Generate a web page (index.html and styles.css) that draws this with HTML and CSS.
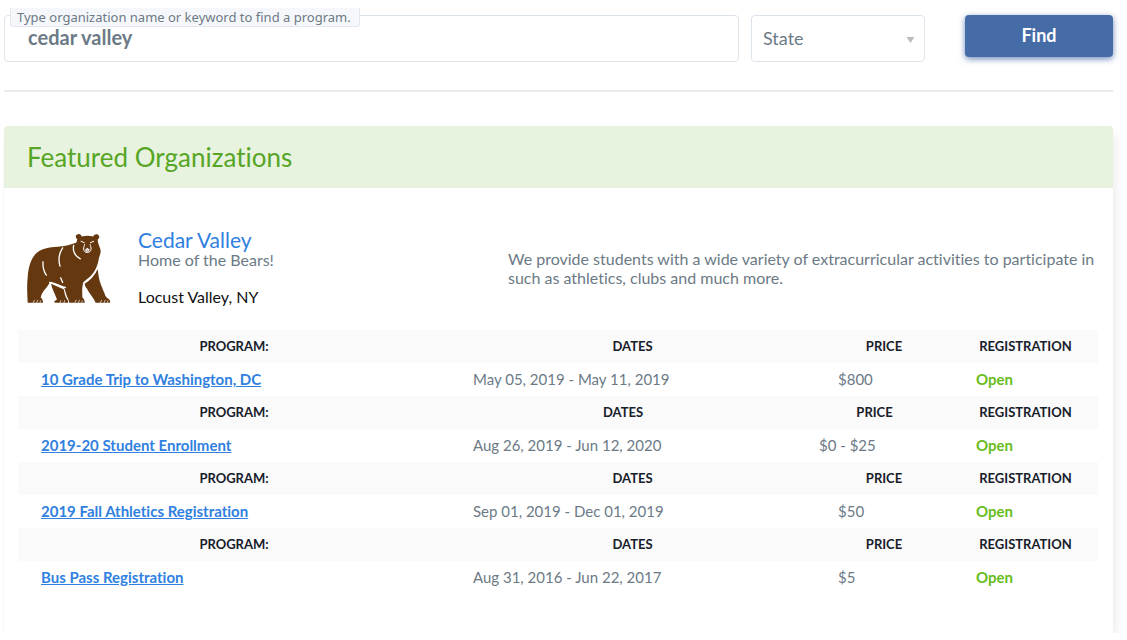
FILE: index.html
```html
<!DOCTYPE html>
<html lang="en">

<head>
    <meta charset="UTF-8">
    <meta name="viewport" content="width=device-width, initial-scale=1.0">
    <title>Find a program</title>
    <link rel="stylesheet" href="styles.css">
</head>

<body>
    <main class="page">
        <form class="search" action="#">
            <div class="search-field">
                <label class="search-label" for="keyword">Type organization name or keyword to find a program.</label>
                <input class="search-input" id="keyword" type="text" value="cedar valley">
            </div>
            <div class="state-field">
                <select class="state-select" aria-label="State">
                    <option>State</option>
                    <option>NY</option>
                </select>
                <svg class="state-arrow" viewBox="0 0 8 6"><path d="M0 0h8L4 6z" /></svg>
            </div>
            <button class="find-btn" type="submit">Find</button>
        </form>

        <section class="card">
            <h1 class="card-title">Featured Organizations</h1>
            <div class="card-body">
                <div class="org">
                    <svg class="org-logo" viewBox="33 40 258 212">
                        <!-- body and head -->
                        <path fill="#65380f" d="M38 249C37 226 35 200 38 172C40 142 47 119 62 102C78 86 103 82 128 81C148 80 164 76 183 69C187 65 185 61 187 58C180 54 181 44 189 43C195 42 199 45 200 50C211 47 224 47 235 50C237 44 244 42 249 45C255 49 253 56 248 59C248 70 253 78 256 88C259 98 254 106 252 114C248 136 243 153 228 168C219 176 209 182 205 189C200 202 202 220 202 232C208 238 209 242 209 249H163L160 238C153 225 151 209 146 202L107 187C101 192 98 198 94 204C83 216 79 224 77 233C83 238 84 243 84 249Z" />
                        <!-- far legs -->
                        <path fill="#65380f" d="M108 192L146 208C149 220 150 229 156 238C160 242 160 247 159 249H120L117 245L126 239C120 223 112 210 108 192Z" />
                        <path fill="#65380f" d="M248 148L251 169C253 185 262 205 269 222C271 230 274 233 280 237C286 241 286 246 285 249H242C237 235 222 221 216 207C211 202 210 197 209 192C223 181 238 167 248 148Z" />
                        <!-- muscle and claw lines -->
                        <g fill="none" stroke="#fff" stroke-width="4" stroke-linecap="round">
                            <path d="M176 77C172 94 181 110 196 117" />
                            <path d="M143 84C131 102 130 122 135 139" />
                            <path d="M84 126C83 143 86 155 94 166" />
                            <path d="M137 174L143 188" />
                            <path d="M104 188C119 190 133 197 151 203" />
                            <path d="M246 145C238 165 222 182 206 190" />
                        </g>
                        <g fill="none" stroke="#fff" stroke-width="2">
                            <path d="M54 249l5-9M65 249l4-9M75 249l2-7M135 249l3-8M147 249l2-8M179 249l5-9M190 249l4-9M200 249l2-7M256 249l4-9M267 249l4-9M277 249l2-7" />
                        </g>
                        <!-- eyes, muzzle and nose -->
                        <path fill="none" stroke="#fff" stroke-width="3" d="M197 64l12 5M237 64l-12 5M209 73c-1 6-4 10-3 15 1 7 5 10 11 10s10-3 11-10c1-5-2-9-3-15" />
                        <path fill="#fff" d="M210 90l7-6 7 6-4 6h-6z" />
                        <path fill="#65380f" d="M214 90h6l-3 3z" />
                    </svg>
                    <div class="org-info">
                        <a class="org-name" href="#">Cedar Valley</a>
                        <p class="org-motto">Home of the Bears!</p>
                        <p class="org-place">Locust Valley, NY</p>
                    </div>
                    <p class="org-text">We provide students with a wide variety of extracurricular activities to participate in such as athletics, clubs and much more.</p>
                </div>

                <table class="program">
                    <tr>
                        <th class="col-name">PROGRAM:</th>
                        <th>DATES</th>
                        <th class="col-price">PRICE</th>
                        <th class="col-reg">REGISTRATION</th>
                    </tr>
                    <tr>
                        <td><a href="#">10 Grade Trip to Washington, DC</a></td>
                        <td>May 05, 2019 - May 11, 2019</td>
                        <td>$800</td>
                        <td class="open">Open</td>
                    </tr>
                </table>
                <table class="program">
                    <tr>
                        <th class="col-name">PROGRAM:</th>
                        <th>DATES</th>
                        <th class="col-price wide">PRICE</th>
                        <th class="col-reg">REGISTRATION</th>
                    </tr>
                    <tr>
                        <td><a href="#">2019-20 Student Enrollment</a></td>
                        <td>Aug 26, 2019 - Jun 12, 2020</td>
                        <td>$0 - $25</td>
                        <td class="open">Open</td>
                    </tr>
                </table>
                <table class="program">
                    <tr>
                        <th class="col-name">PROGRAM:</th>
                        <th>DATES</th>
                        <th class="col-price">PRICE</th>
                        <th class="col-reg">REGISTRATION</th>
                    </tr>
                    <tr>
                        <td><a href="#">2019 Fall Athletics Registration</a></td>
                        <td>Sep 01, 2019 - Dec 01, 2019</td>
                        <td>$50</td>
                        <td class="open">Open</td>
                    </tr>
                </table>
                <table class="program">
                    <tr>
                        <th class="col-name">PROGRAM:</th>
                        <th>DATES</th>
                        <th class="col-price">PRICE</th>
                        <th class="col-reg">REGISTRATION</th>
                    </tr>
                    <tr>
                        <td><a href="#">Bus Pass Registration</a></td>
                        <td>Aug 31, 2016 - Jun 22, 2017</td>
                        <td>$5</td>
                        <td class="open">Open</td>
                    </tr>
                </table>
            </div>
        </section>
    </main>
</body>

</html>
```
FILE: styles.css
```css
* {
    box-sizing: border-box;
}

body {
    margin: 0;
    background: #fff;
    color: #6c7a86;
    font: 16px/19px Lato, "Liberation Sans", sans-serif;
    font-variant-ligatures: none;
}

p,
h1 {
    margin: 0;
}

.page {
    margin: 8px 7px 8px 3px;
    padding: 7px 7px 0 1px;
    overflow: hidden;
}

/* search bar */
.search {
    display: flex;
    align-items: flex-start;
    padding-bottom: 28px;
    border-bottom: 2px solid #e9ecef;
}

.search-field {
    flex: 1;
}

.search-label {
    position: absolute;
    top: 8px;
    left: 10px;
    padding: 0 8px 0 6px;
    border: 1px solid #e3e8ef;
    border-top: 0;
    border-radius: 0 0 3px 3px;
    background: #f5f7fa;
    font: 13px/18px "Noto Sans", sans-serif;
}

.search-input,
.state-select {
    display: block;
    width: 100%;
    height: 47px;
    border: 1px solid #dde3eb;
    border-radius: 4px;
    background: #fff;
    color: #6c7a86;
    font-family: inherit;
}

.search-input {
    padding: 0 23px 3px;
    font-size: 20px;
    font-weight: bold;
}

.state-field {
    position: relative;
    width: 174px;
    margin-left: 12px;
}

.state-select {
    padding: 0 11px 2px;
    font-size: 18px;
    appearance: none;
}

.state-arrow {
    position: absolute;
    top: 22px;
    right: 10px;
    width: 9px;
    height: 6px;
    fill: #b9bdc1;
    pointer-events: none;
}

.find-btn {
    width: 148px;
    height: 42px;
    margin-left: 40px;
    padding-bottom: 3px;
    border: 0;
    border-radius: 4px;
    background: #466ca8;
    box-shadow: 0 2px 6px rgba(50, 90, 160, .7);
    color: #fff;
    font-family: inherit;
    font-size: 18px;
    font-weight: bold;
}

/* organizations */
.card {
    margin-top: 34px;
    border-radius: 4px 4px 0 0;
    box-shadow: 2px 8px 12px #e9e9ea;
}

.card-title {
    padding: 0 23px;
    border-radius: 4px 4px 0 0;
    background: #e8f3df;
    color: #57a524;
    font-size: 26px;
    font-weight: normal;
    line-height: 62px;
}

.card-body {
    padding: 41px 15px 39px 14px;
}

.org {
    display: flex;
    padding: 0 0 24px 8px;
}

.org-logo {
    width: 86px;
    height: 71px;
    margin-top: 4px;
}

.org-info {
    flex: 1;
    padding-left: 26px;
}

.org-name {
    display: block;
    color: #2f80e0;
    font-size: 21px;
    line-height: 21px;
    text-decoration: none;
}

.org-place {
    margin-top: 18px;
    color: #111;
}

.org-text {
    width: 600px;
    margin-right: -10px;
    padding-top: 20px;
}

.program {
    width: 100%;
    table-layout: fixed;
    border-collapse: collapse;
    font-size: 15px;
}

.program th,
.program td {
    height: 33px;
    padding: 0 23px;
    text-align: left;
}

.program th {
    background: #fafafa;
    color: #17202a;
    font-size: 13px;
    text-align: center;
}

.program a {
    color: #2f80e0;
    font-weight: bold;
}

.program .open {
    color: #68bd1c;
    font-weight: bold;
}

.col-name {
    width: 40%;
}

.col-price {
    width: 138px;
}

.col-price.wide {
    width: 157px;
}

.col-reg {
    width: 145px;
}
```
